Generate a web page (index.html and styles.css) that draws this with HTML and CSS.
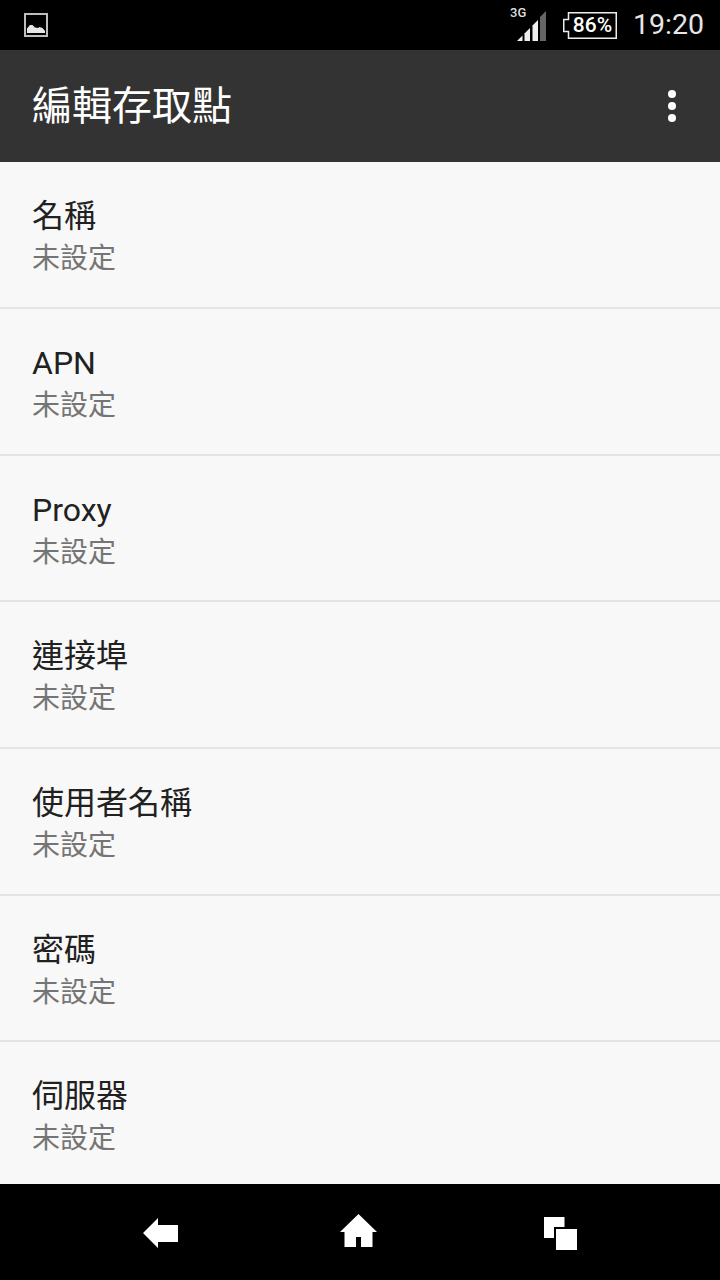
FILE: index.html
```html
<!DOCTYPE html>
<html lang="zh-Hant">
<head>
  <meta charset="UTF-8">
  <meta name="viewport" content="width=device-width, initial-scale=1.0">
  <title>編輯存取點</title>
  <link rel="stylesheet" href="styles.css">
</head>

<body>
  <div class="phone">
    <!-- Status Bar -->
    <div class="status-bar">
      <svg class="notif-icon" width="24" height="24" viewBox="0 0 24 24">
        <rect x="1" y="1" width="22" height="22" fill="none" stroke="#bdbdbd" stroke-width="2"/>
        <path d="M3 20V15.500L6 12H8.500L11 14.500L14 15L15.500 14L18.500 15L21 18V20Z" fill="#e6e6e6"/>
      </svg>
      <div class="status-right">
        <div class="signal">
          <span class="signal-label">3G</span>
          <svg width="29" height="30" viewBox="0 0 29 30">
            <path d="M0 30L5.500 24.500V30Z" fill="#eeeeee"/>
            <path d="M7.500 30V22.500L13 17V30Z" fill="#eeeeee"/>
            <path d="M15.500 30V14.500L21 9V30Z" fill="#eeeeee"/>
            <path d="M23 30V6L29 0V30Z" fill="#666666"/>
          </svg>
        </div>
        <div class="battery">
          <svg width="54" height="27" viewBox="0 0 54 27">
            <path d="M5.500 .75H53.250V26.250H5.500V19.500H.75V7.500H5.500Z" fill="none" stroke="#eeeeee" stroke-width="1.500"/>
          </svg>
          <span class="battery-text">86%</span>
        </div>
        <span class="clock">19:20</span>
      </div>
    </div>

    <!-- Action Bar -->
    <div class="action-bar">
      <h1 class="action-title">編輯存取點</h1>
      <div class="overflow-menu">
        <span class="menu-dot"></span>
        <span class="menu-dot"></span>
        <span class="menu-dot"></span>
      </div>
    </div>

    <!-- Settings List -->
    <div class="pref-list">
      <div class="pref-row">
        <div class="pref-title">名稱</div>
        <div class="pref-value">未設定</div>
      </div>
      <div class="pref-row">
        <div class="pref-title">APN</div>
        <div class="pref-value">未設定</div>
      </div>
      <div class="pref-row">
        <div class="pref-title">Proxy</div>
        <div class="pref-value">未設定</div>
      </div>
      <div class="pref-row">
        <div class="pref-title">連接埠</div>
        <div class="pref-value">未設定</div>
      </div>
      <div class="pref-row">
        <div class="pref-title">使用者名稱</div>
        <div class="pref-value">未設定</div>
      </div>
      <div class="pref-row">
        <div class="pref-title">密碼</div>
        <div class="pref-value">未設定</div>
      </div>
      <div class="pref-row">
        <div class="pref-title">伺服器</div>
        <div class="pref-value">未設定</div>
      </div>
    </div>

    <!-- Navigation Bar -->
    <div class="nav-bar">
      <svg class="nav-icon" width="35" height="40" viewBox="0 0 35 40">
        <path d="M0 21L15 6V13H35V30H15V36Z" fill="#fff"/>
      </svg>
      <svg class="nav-icon" width="37" height="40" viewBox="0 0 37 40">
        <path d="M18.500 2L37 20H32.500V35H21V25H16V35H4.500V20H0Z" fill="#fff"/>
      </svg>
      <svg class="nav-icon nav-recents" width="33" height="40" viewBox="0 0 33 40">
        <path d="M0 5H20.500V15H10V26H0Z" fill="#fff"/>
        <rect x="12" y="17" width="21" height="21" fill="#fff"/>
      </svg>
    </div>
  </div>
</body>
</html>
```

FILE: styles.css
```css
/* Global Styles */
html, body {
  margin: 0;
  padding: 0;
}
body {
  font-family: Roboto, "Noto Sans CJK TC", sans-serif;
  background-color: #000;
}
.phone {
  width: 720px;
  height: 1280px;
  display: flex;
  flex-direction: column;
  overflow: hidden;
}

/* Status Bar */
.status-bar {
  height: 50px;
  flex: none;
  background-color: #000;
  display: flex;
  align-items: center;
  justify-content: space-between;
  padding: 0 16px 0 24px;
  box-sizing: border-box;
}
.notif-icon {
  display: block;
}
.status-right {
  display: flex;
  align-items: center;
}
.signal {
  position: relative;
  width: 29px;
  height: 30px;
  margin-top: 2px;
  margin-right: 17px;
}
.signal svg {
  display: block;
}
.signal-label {
  position: absolute;
  top: -6px;
  left: -7px;
  font-size: 13px;
  font-weight: 500;
  line-height: 16px;
  color: #ddd;
}
.battery {
  position: relative;
  width: 54px;
  height: 27px;
  margin-right: 16px;
}
.battery svg {
  display: block;
}
.battery-text {
  position: absolute;
  top: 0;
  left: 5px;
  right: 0;
  text-align: center;
  font-size: 21px;
  font-weight: 500;
  color: #fff;
  line-height: 27px;
}
.clock {
  font-size: 28.500px;
  color: #e6e6e6;
  line-height: 50px;
}

/* Action Bar */
.action-bar {
  height: 112px;
  flex: none;
  background-color: #333;
  display: flex;
  align-items: center;
  justify-content: space-between;
  padding: 0 44px 0 32px;
  box-sizing: border-box;
}
.action-title {
  margin: 2px 0 0;
  font-size: 40px;
  font-weight: 400;
  color: #fff;
  line-height: 56px;
}
.overflow-menu {
  display: flex;
  flex-direction: column;
  gap: 4px;
}
.menu-dot {
  width: 8px;
  height: 8px;
  border-radius: 50%;
  background-color: #fff;
}

/* Settings List */
.pref-list {
  flex: 1;
  background-color: #f8f8f8;
  overflow: hidden;
  padding-top: .33px;
}
.pref-row {
  height: 146.670px;
  box-sizing: border-box;
  padding: 32px 32px 0;
  border-bottom: 2px solid #e4e4e4;
}
.pref-row:last-child {
  border-bottom: none;
}
.pref-title {
  font-size: 32px;
  line-height: 45px;
  color: #212121;
}
.pref-value {
  font-size: 28px;
  line-height: 40px;
  color: #757575;
}

/* Navigation Bar */
.nav-bar {
  height: 96px;
  flex: none;
  background-color: #000;
  display: flex;
  align-items: center;
  gap: 162px;
  padding-left: 143px;
}
.nav-icon {
  display: block;
}
.nav-recents {
  margin-left: 5px;
}
```
